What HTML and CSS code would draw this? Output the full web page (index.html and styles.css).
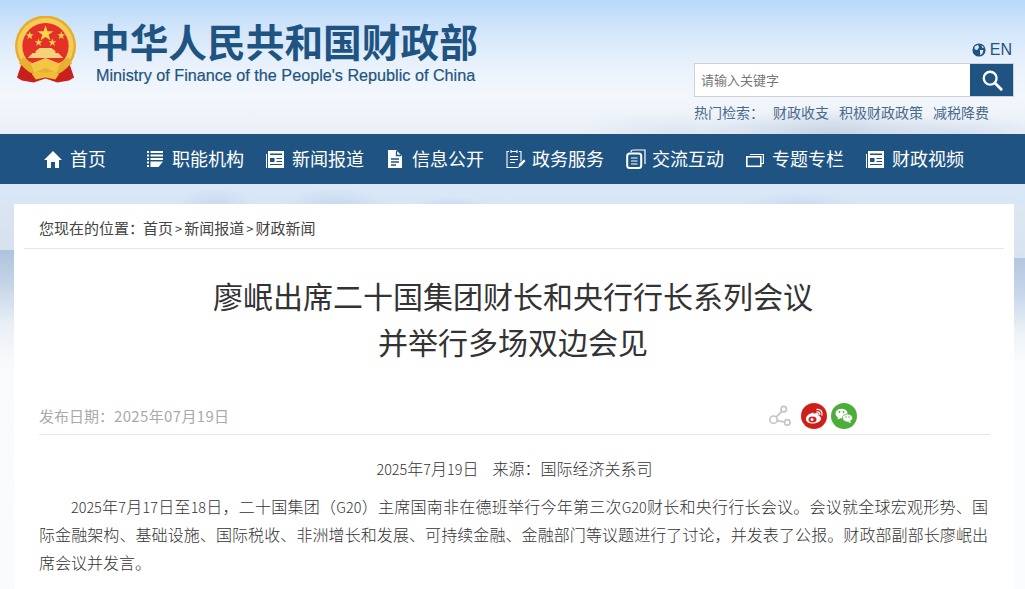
FILE: index.html
```html
<!DOCTYPE html>
<html lang="zh-CN">
<head>
<meta charset="utf-8">
<title>廖岷出席二十国集团财长和央行行长系列会议并举行多场双边会见</title>
<link rel="stylesheet" href="styles.css">
</head>
<body>
<header class="top">
  <div class="brand">
    <svg class="emblem" viewBox="0 0 64 68" aria-hidden="true">
      <path d="M9 44 L3 62 L8 65 L20 67 L32 63 L44 67 L56 65 L61 62 L55 44 Z" fill="#c8201c"/>
      <circle cx="32" cy="30" r="31" fill="#e6ad2e"/>
      <circle cx="32" cy="30" r="28.5" fill="#f5cc55"/>
      <circle cx="32" cy="30" r="23.5" fill="#e5302a"/>
      <path d="M9 41 Q32 60 55 41 L59 48 Q32 67 5 48 Z" fill="#e8b031"/>
      <path d="M17 48 L21 57 L32 52 L43 57 L47 48 L32 42 Z" fill="#f3c648"/>
      <path d="M14 42 H50 L45 37 H42 V35 L38 32 H26 L22 35 V37 H19 Z" fill="#f4d27a"/>
      <path d="M18 58 L28 56 L32 59 L36 56 L46 58 L42 64 L32 62 L22 64 Z" fill="#f0bd3a"/>
      <path d="M32 9 L34 15 L40 15 L35.200 18.500 L37 24 L32 20.700 L27 24 L28.800 18.500 L24 15 L30 15 Z" fill="#fbd54a"/>
      <path d="M16 15 L17 18 L20 18 L17.600 19.800 L18.500 23 L16 21 L13.500 23 L14.400 19.800 L12 18 L15 18 Z" fill="#fbd54a"/>
      <path d="M48 15 L49 18 L52 18 L49.600 19.800 L50.500 23 L48 21 L45.500 23 L46.400 19.800 L44 18 L47 18 Z" fill="#fbd54a"/>
      <path d="M25 22 L26 25 L29 25 L26.600 26.800 L27.500 30 L25 28 L22.500 30 L23.400 26.800 L21 25 L24 25 Z" fill="#fbd54a"/>
      <path d="M39 22 L40 25 L43 25 L40.600 26.800 L41.500 30 L39 28 L36.500 30 L37.400 26.800 L35 25 L38 25 Z" fill="#fbd54a"/>
    </svg>
    <div class="brand-text">
      <div class="brand-cn">中华人民共和国财政部</div>
      <div class="brand-en">Ministry of Finance of the People's Republic of China</div>
    </div>
  </div>
  <div class="tools">
    <a class="lang">
      <svg class="globe" viewBox="0 0 16 16" aria-hidden="true">
        <circle cx="8" cy="8" r="7.500" fill="#1f5482"/>
        <path d="M3 4 L7 2 L8 5 L6 8 L3 7 Z M9 8 L13 8 L12 12 L9.500 14 Z M11 2.500 L14 5 L11.500 5.500 Z" fill="#dfeaf5"/>
      </svg>
      <span>EN</span>
    </a>
    <div class="search">
      <span class="placeholder">请输入关键字</span>
      <span class="search-btn">
        <svg viewBox="0 0 24 24" aria-hidden="true">
          <circle cx="10" cy="10" r="7" fill="none" stroke="#fff" stroke-width="2.500"/>
          <path d="M15.500 15.500 L22 22" stroke="#fff" stroke-width="3.200" stroke-linecap="round"/>
        </svg>
      </span>
    </div>
    <div class="hot">
      <span class="hot-label">热门检索：</span>
      <a>财政收支</a><a>积极财政政策</a><a>减税降费</a>
    </div>
  </div>
</header>

<nav class="nav">
  <a class="nav-item nav-home">
    <svg class="nav-ico" viewBox="0 0 18 18" aria-hidden="true"><path d="M9 1 L18 10 H15 V18 H11 V12 H7 V18 H3 V10 H0 Z" fill="#fff"/></svg>
    <span>首页</span>
  </a>
  <a class="nav-item">
    <svg class="nav-ico" viewBox="0 0 18 18" aria-hidden="true"><path d="M1 1 H3 V3 H1 Z M1 4.500 H3 V6.500 H1 Z M1 8 H3 V10 H1 Z M1 11.500 H3 V13.500 H1 Z M1 15 H3 V17 H1 Z M4.500 1 H17 V3 H4.500 Z M4.500 4.500 H17 V6.500 H4.500 Z M4.500 8 H17 V10 H4.500 Z M4.500 11.500 H17 L12.500 17 H4.500 Z" fill="#fff"/></svg>
    <span>职能机构</span>
  </a>
  <a class="nav-item">
    <svg class="nav-ico" viewBox="0 0 18 18" aria-hidden="true"><path d="M0 4 H1 V18 H0 Z M2 1 H18 V18 H2 Z" fill="#fff"/><path d="M4 3.500 H16 V5 H4 Z M4 8 H8.500 V12 H4 Z M10.500 8 H16 V9 H10.500 Z M10.500 11 H16 V12 H10.500 Z M4 14 H16 V15 H4 Z" fill="#1f5482"/></svg>
    <span>新闻报道</span>
  </a>
  <a class="nav-item">
    <svg class="nav-ico" viewBox="0 0 18 18" aria-hidden="true"><path d="M2 0 H10 L16 6 V18 H2 Z" fill="#fff"/><path d="M10.500 1 V5.500 H15 M5 9 H13 M5 12 H13 M5 15 H10" stroke="#1f5482" stroke-width="1.300" fill="none"/></svg>
    <span>信息公开</span>
  </a>
  <a class="nav-item">
    <svg class="nav-ico nav-ico-wide" viewBox="0 0 20 19" aria-hidden="true"><path d="M3 2 H1 V18 H12 M15 12 V2 H13 M5 0.500 V3.500 M11 0.500 V3.500 M5 2 H11 M4 7 H12 M4 10 H12 M4 13 H9" stroke="#fff" stroke-width="1.100" fill="none"/><path d="M12 18.500 L13.500 14 L18 10 L19.500 11.500 L15.500 16 Z" fill="#fff"/></svg>
    <span>政务服务</span>
  </a>
  <a class="nav-item">
    <svg class="nav-ico nav-ico-wide" viewBox="0 0 20 20" aria-hidden="true"><rect x="1.200" y="4.500" width="14" height="14.500" rx="2.500" fill="none" stroke="#fff" stroke-width="2"/><path d="M5 3 Q5 1 7.500 1 H19.500 M19 1 V15 M5 9 H11.500 M5 12 H11.500 M5 15 H11.500" stroke="#fff" stroke-width="1.200" fill="none"/></svg>
    <span>交流互动</span>
  </a>
  <a class="nav-item">
    <svg class="nav-ico" viewBox="0 0 18 18" aria-hidden="true"><rect x="0.800" y="6.800" width="14" height="9.500" fill="none" stroke="#fff" stroke-width="1.600"/><path d="M4 4.500 H17.400 V13.500 H15" fill="none" stroke="#fff" stroke-width="1.100"/></svg>
    <span>专题专栏</span>
  </a>
  <a class="nav-item">
    <svg class="nav-ico" viewBox="0 0 18 18" aria-hidden="true"><path d="M0 4 H1 V18 H0 Z M2 1 H18 V18 H2 Z" fill="#fff"/><path d="M4 3.500 H16 V5 H4 Z M4 8 H8.500 V12 H4 Z M10.500 8 H16 V9 H10.500 Z M10.500 11 H16 V12 H10.500 Z M4 14 H16 V15 H4 Z" fill="#1f5482"/></svg>
    <span>财政视频</span>
  </a>
</nav>

<main class="wrap">
  <section class="card">
    <div class="crumb">
      <span class="crumb-label">您现在的位置：</span><a>首页</a><i>&gt;</i><a>新闻报道</a><i>&gt;</i><a>财政新闻</a>
    </div>
    <article class="article">
      <h1 class="title">廖岷出席二十国集团财长和央行行长系列会议<br>并举行多场双边会见</h1>
      <div class="meta">
        <span class="date">发布日期：<span class="date-num">2025年07月19日</span></span>
        <div class="share">
          <svg class="share-link" viewBox="0 0 24 24" aria-hidden="true">
            <circle cx="5" cy="16" r="4" fill="none" stroke="#c4c4c4" stroke-width="1.800"/>
            <circle cx="16" cy="4.500" r="3" fill="none" stroke="#c4c4c4" stroke-width="1.800"/>
            <circle cx="20" cy="19" r="3" fill="none" stroke="#c4c4c4" stroke-width="1.800"/>
            <path d="M8 13 L14 7 M9 17 L17 18.500" stroke="#c4c4c4" stroke-width="1.800"/>
          </svg>
          <svg class="share-btn" viewBox="0 0 26 26" aria-hidden="true">
            <circle cx="13" cy="13" r="13" fill="#cf1f1b"/>
            <path d="M11 10 C7 11 4.500 14 5 16.500 C5.500 19.500 9 21 13 20.500 C17 20 20 18 20 15.500 C20 13.500 18 13 17.500 12.500 C18 11 17.500 9.500 15 10 L12.500 11 C13 9.500 12.500 9 11 10 Z" fill="#fff"/>
            <ellipse cx="11.500" cy="16.500" rx="4" ry="3" fill="#cf1f1b"/>
            <circle cx="11" cy="16.500" r="1.500" fill="#fff"/>
            <path d="M16 6.500 C19.500 6 21.500 8.500 21 12 M16 9 C18 8.700 19 10 18.700 11.500" fill="none" stroke="#fff" stroke-width="1.300" stroke-linecap="round"/>
          </svg>
          <svg class="share-btn" viewBox="0 0 26 26" aria-hidden="true">
            <circle cx="13" cy="13" r="13" fill="#4cae3a"/>
            <ellipse cx="10.500" cy="10.500" rx="6" ry="4.800" fill="#fff"/>
            <path d="M7 14 L6.500 16.500 L10 15 Z" fill="#fff"/>
            <ellipse cx="16.500" cy="15" rx="5" ry="4" fill="#fff" stroke="#4cae3a" stroke-width="0.800"/>
            <path d="M19 18 L20 20 L16.500 19 Z" fill="#fff"/>
            <circle cx="8.500" cy="9" r="0.900" fill="#4cae3a"/><circle cx="12.500" cy="9" r="0.900" fill="#4cae3a"/>
            <circle cx="15" cy="14" r="0.700" fill="#4cae3a"/><circle cx="18" cy="14" r="0.700" fill="#4cae3a"/>
          </svg>
        </div>
      </div>
      <div class="body">
        <p class="byline"><span class="num">2025</span>年<span class="num">7</span>月<span class="num">19</span>日 &nbsp; &nbsp;来源：国际经济关系司</p>
        <p class="para"><span class="num">2025</span>年<span class="num">7</span>月<span class="num">17</span>日至<span class="num">18</span>日，二十国集团（<span class="num">G20</span>）主席国南非在德班举行今年第三次<span class="num">G20</span>财长和央行行长会议。会议就全球宏观形势、国际金融架构、基础设施、国际税收、非洲增长和发展、可持续金融、金融部门等议题进行了讨论，并发表了公报。财政部副部长廖岷出席会议并发言。</p>
      </div>
    </article>
  </section>
</main>
</body>
</html>
```
FILE: styles.css
```css
* { box-sizing: border-box; }
html, body { margin: 0; height: 100%; }
body {
  height: 589px;
  overflow: hidden;
  font-family: "Noto Sans CJK SC", sans-serif;
  color: #333;
  background: #fafbfd;
}
a { color: inherit; text-decoration: none; }

.top {
  height: 134px;
  display: flex;
  justify-content: space-between;
  padding: 16px 11px 0 14px;
  background:
    radial-gradient(ellipse 130px 26px at 830px 134px, #c5d3e3 0, rgba(197,211,227,0) 100%),
    radial-gradient(ellipse 110px 22px at 680px 134px, #dde6f1 0, rgba(221,230,241,0) 100%),
    radial-gradient(ellipse 90px 20px at 960px 134px, #d6e1ee 0, rgba(214,225,238,0) 100%),
    linear-gradient(#b8d9fb 0, #cfe4fb 25px, #e6f0fb 60px, #f3f7fc 95px, #eaf0f7 134px);
}
.brand { display: flex; align-items: flex-start; }
.emblem { width: 63px; height: 68px; flex: none; }
.brand-text { margin-left: 14px; }
.brand-cn {
  font-size: 38.700px;
  line-height: 48px;
  font-weight: 700;
  color: #1f5482;
  white-space: nowrap;
}
.brand-en {
  margin-top: 2px;
  margin-left: 5px;
  font-family: "Liberation Sans", Arial, sans-serif;
  font-size: 16.200px;
  line-height: 18px;
  color: #1f5482;
  white-space: nowrap;
  -webkit-text-stroke: 0.2px #1f5482;
}

.tools { width: 320px; padding-top: 24px; }
.lang {
  display: flex;
  justify-content: flex-end;
  align-items: center;
  gap: 4px;
  height: 19px;
  font-family: "Liberation Sans", Arial, sans-serif;
  font-size: 16px;
  color: #1f5482;
  padding-right: 2px;
}
.globe { width: 14px; height: 14px; }
.search {
  display: flex;
  align-items: stretch;
  height: 34px;
  margin-top: 4px;
  background: #fff;
  border: 1px solid #ccd1d9;
}
.placeholder {
  flex: 1;
  padding-left: 6px;
  font-size: 13px;
  line-height: 31px;
  color: #777;
}
.search-btn {
  width: 43px;
  display: flex;
  align-items: center;
  justify-content: center;
  background: #1f5482;
}
.search-btn svg { width: 22px; height: 22px; }
.hot {
  display: flex;
  margin-top: 5px;
  font-size: 14px;
  line-height: 20px;
  color: #4a6a8c;
  white-space: nowrap;
}
.hot-label { width: 79px; }
.hot a { margin-right: 10px; }

.nav {
  height: 50px;
  display: flex;
  align-items: center;
  padding-left: 44px;
  background: #1f5482;
  color: #fff;
  font-size: 18px;
}
.nav-item { width: 120px; display: flex; align-items: center; gap: 8px; white-space: nowrap; }
.nav-item span { margin-bottom: 3px; }
.nav-home { width: 102px; }
.nav-ico { width: 18px; height: 18px; flex: none; }
.nav-ico-wide { width: 20px; height: 20px; margin-right: -2px; }

.wrap {
  padding: 20px 11px 0 14px;
  background:
    radial-gradient(ellipse 40px 16px at 215px 20px, #c8daef 0, rgba(200,218,239,0) 100%),
    radial-gradient(ellipse 55px 18px at 335px 22px, #c6d8ee 0, rgba(198,216,238,0) 100%),
    radial-gradient(ellipse 40px 10px at 450px 22px, #c9dbef 0, rgba(201,219,239,0) 100%),
    radial-gradient(ellipse 60px 14px at 800px 22px, #c9dbef 0, rgba(201,219,239,0) 100%),
    linear-gradient(#dae7f7, #d9e6f6) 0 0 / 100% 20px no-repeat,
    linear-gradient(#dbe5f1 0, #d7e2ef 46px, #adc3de 46px, #c4d4e7 80px, #e9eff6 120px, #f9fafc 160px, #fafbfd 100%) 0 20px / 14px 100% no-repeat,
    linear-gradient(#dde7f2 0, #d8e3f0 54px, #b3c7e1 54px, #c7d7ea 90px, #eef3f8 130px, #fbfcfd 160px) right 20px / 11px 100% no-repeat;
}
.card { background: #fff; padding: 0 10px; height: 400px; }
.crumb {
  height: 45px;
  padding: 0 0 0 15px;
  border-bottom: 1px solid #e6e6e6;
  font-size: 15px;
  line-height: 47px;
  color: #444;
  white-space: nowrap;
}
.crumb-label { display: inline-block; width: 104px; }
.crumb i { font-style: normal; margin: 0 2px; font-size: 13px; }

.article { padding: 0 14px 0 15px; }
.title {
  margin: 23px 0 0;
  padding-right: 3px;
  text-align: center;
  font-size: 30px;
  line-height: 46px;
  font-weight: 400;
  color: #333;
}
.meta {
  height: 71px;
  display: flex;
  justify-content: space-between;
  align-items: flex-end;
  padding: 0 133px 5px 0;
  border-bottom: 1px solid #e6e6e6;
}
.date { font-size: 15px; line-height: 27px; color: #aaa; }
.date-num { letter-spacing: 0.35px; }
.share { display: flex; align-items: center; gap: 4px; }
.share-link { width: 22px; height: 22px; margin-right: 6px; }
.share-btn { width: 26px; height: 26px; }

.body { font-size: 16px; color: #333; font-weight: 300; }
.num { font-size: 14.400px; line-height: 1; }
.byline { margin: 19px 0 0; line-height: 28px; text-align: center; }
.para { margin: 10px 2px 0 0; line-height: 28px; text-indent: 32px; text-align: justify; }
```
